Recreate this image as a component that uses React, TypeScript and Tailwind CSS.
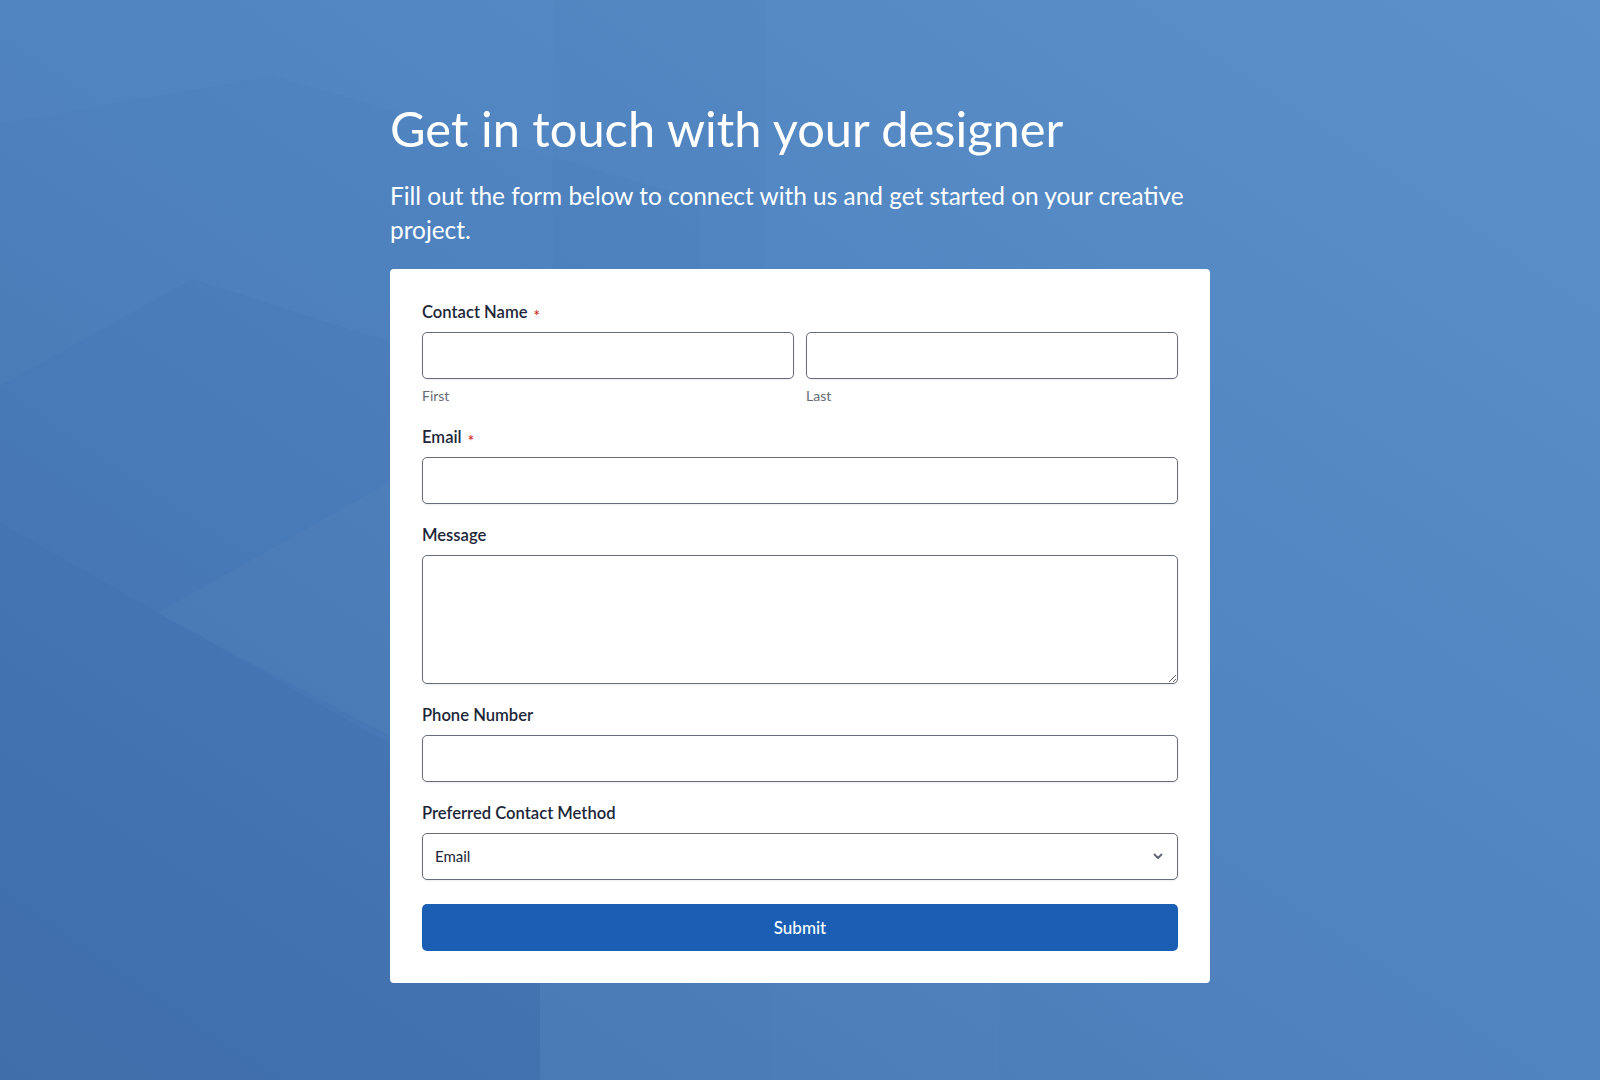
import { useState } from "react";

const font = { fontFamily: "Lato, 'Open Sans', sans-serif" };

const Backdrop = () => (
  <svg
    className="absolute inset-0 h-full w-full"
    viewBox="0 0 1600 1080"
    preserveAspectRatio="none"
  >
    <defs>
      <linearGradient id="bg" x1="0" y1="1" x2="1" y2="0">
        <stop offset="0" stopColor="#4675b1" />
        <stop offset="0.55" stopColor="#5185c1" />
        <stop offset="1" stopColor="#5c90ca" />
      </linearGradient>
    </defs>
    <rect width="1600" height="1080" fill="url(#bg)" />
    {/* soft low-poly shapes, right edges tucked behind the card */}
    <polygon points="0,124 273,76 700,200 700,980 540,980 540,1080 0,1080" fill="#1c4a8a" opacity="0.035" />
    <polygon points="0,386 192,279 700,440 700,980 540,980 540,1080 0,1080" fill="#1c4a8a" opacity="0.045" />
    <polygon points="0,523 700,920 700,980 540,980 540,1080 0,1080" fill="#1c4a8a" opacity="0.055" />
    <polygon points="157,613 390,482 700,440 700,900" fill="#ffffff" opacity="0.025" />
    <rect x="553" y="0" width="212" height="400" fill="#1c4a8a" opacity="0.035" />
    <rect x="772" y="960" width="226" height="120" fill="#ffffff" opacity="0.012" />
  </svg>
);

const Label = ({ text, required }: { text: string; required?: boolean }) => (
  <label className="flex h-[22px] items-center text-[16.6px] font-semibold text-[#1c2739]">
    {text}
    {required && (
      <span className="ml-1.5 translate-y-[3px] text-[15px] leading-none text-[#d0271d]">*</span>
    )}
  </label>
);

const inputCls =
  "mt-[9px] h-[47px] w-full rounded-[5px] border border-[#656c7c] bg-white px-3 text-[15px] text-[#1c2739] shadow-[0_1px_2px_rgba(0,0,0,0.08)] outline-none focus:border-[#1a5fb4]";

export default function App() {
  const [method, setMethod] = useState("Email");

  return (
    <div className="relative min-h-screen w-full overflow-hidden" style={font}>
      <Backdrop />
      <div className="relative mx-auto flex w-[820px] flex-col pt-[99px] pb-24">
        <h1 className="text-[48.8px] leading-[58px] font-normal text-white">
          Get in touch with your designer
        </h1>
        <p className="mt-[22px] text-[24.4px] leading-[34px] font-normal text-white">
          Fill out the form below to connect with us and get started on your creative
          project.
        </p>

        <form className="mt-[22px] flex flex-col rounded bg-white px-8 pt-8 pb-[32px]">
          <div className="flex flex-col">
            <Label text="Contact Name" required />
            <div className="grid grid-cols-2 gap-3">
              <div className="flex flex-col">
                <input type="text" className={inputCls} />
                <span className="mt-[9px] text-[14px] leading-4 text-[#666b75]">First</span>
              </div>
              <div className="flex flex-col">
                <input type="text" className={inputCls} />
                <span className="mt-[9px] text-[14px] leading-4 text-[#666b75]">Last</span>
              </div>
            </div>
          </div>

          <div className="mt-[22px] flex flex-col">
            <Label text="Email" required />
            <input type="email" className={inputCls} />
          </div>

          <div className="mt-[20px] flex flex-col">
            <Label text="Message" />
            <textarea className="mt-[9px] h-[129px] w-full rounded-[5px] border border-[#656c7c] bg-white px-3 py-2 text-[15px] text-[#1c2739] shadow-[0_1px_2px_rgba(0,0,0,0.08)] outline-none focus:border-[#1a5fb4]" />
          </div>

          <div className="mt-[20px] flex flex-col">
            <Label text="Phone Number" />
            <input type="tel" className={inputCls} />
          </div>

          <div className="mt-[20px] flex flex-col">
            <Label text="Preferred Contact Method" />
            <div className="relative">
              <select
                value={method}
                onChange={(e) => setMethod(e.target.value)}
                className={inputCls + " appearance-none pr-10"}
              >
                <option>Email</option>
                <option>Phone</option>
              </select>
              <svg
                className="pointer-events-none absolute top-1/2 right-[14px] mt-[4px] h-3 w-3 -translate-y-1/2 text-[#5c6372]"
                viewBox="0 0 12 12"
                fill="none"
                stroke="currentColor"
                strokeWidth="1.8"
                strokeLinecap="round"
                strokeLinejoin="round"
              >
                <path d="M2.5 4.5 6 8l3.5-3.5" />
              </svg>
            </div>
          </div>

          <button
            type="submit"
            className="mt-[24px] h-[47px] w-full rounded-[5px] bg-[#1a5fb4] text-[17px] font-medium text-white hover:bg-[#16529c]"
          >
            Submit
          </button>
        </form>
      </div>
    </div>
  );
}
